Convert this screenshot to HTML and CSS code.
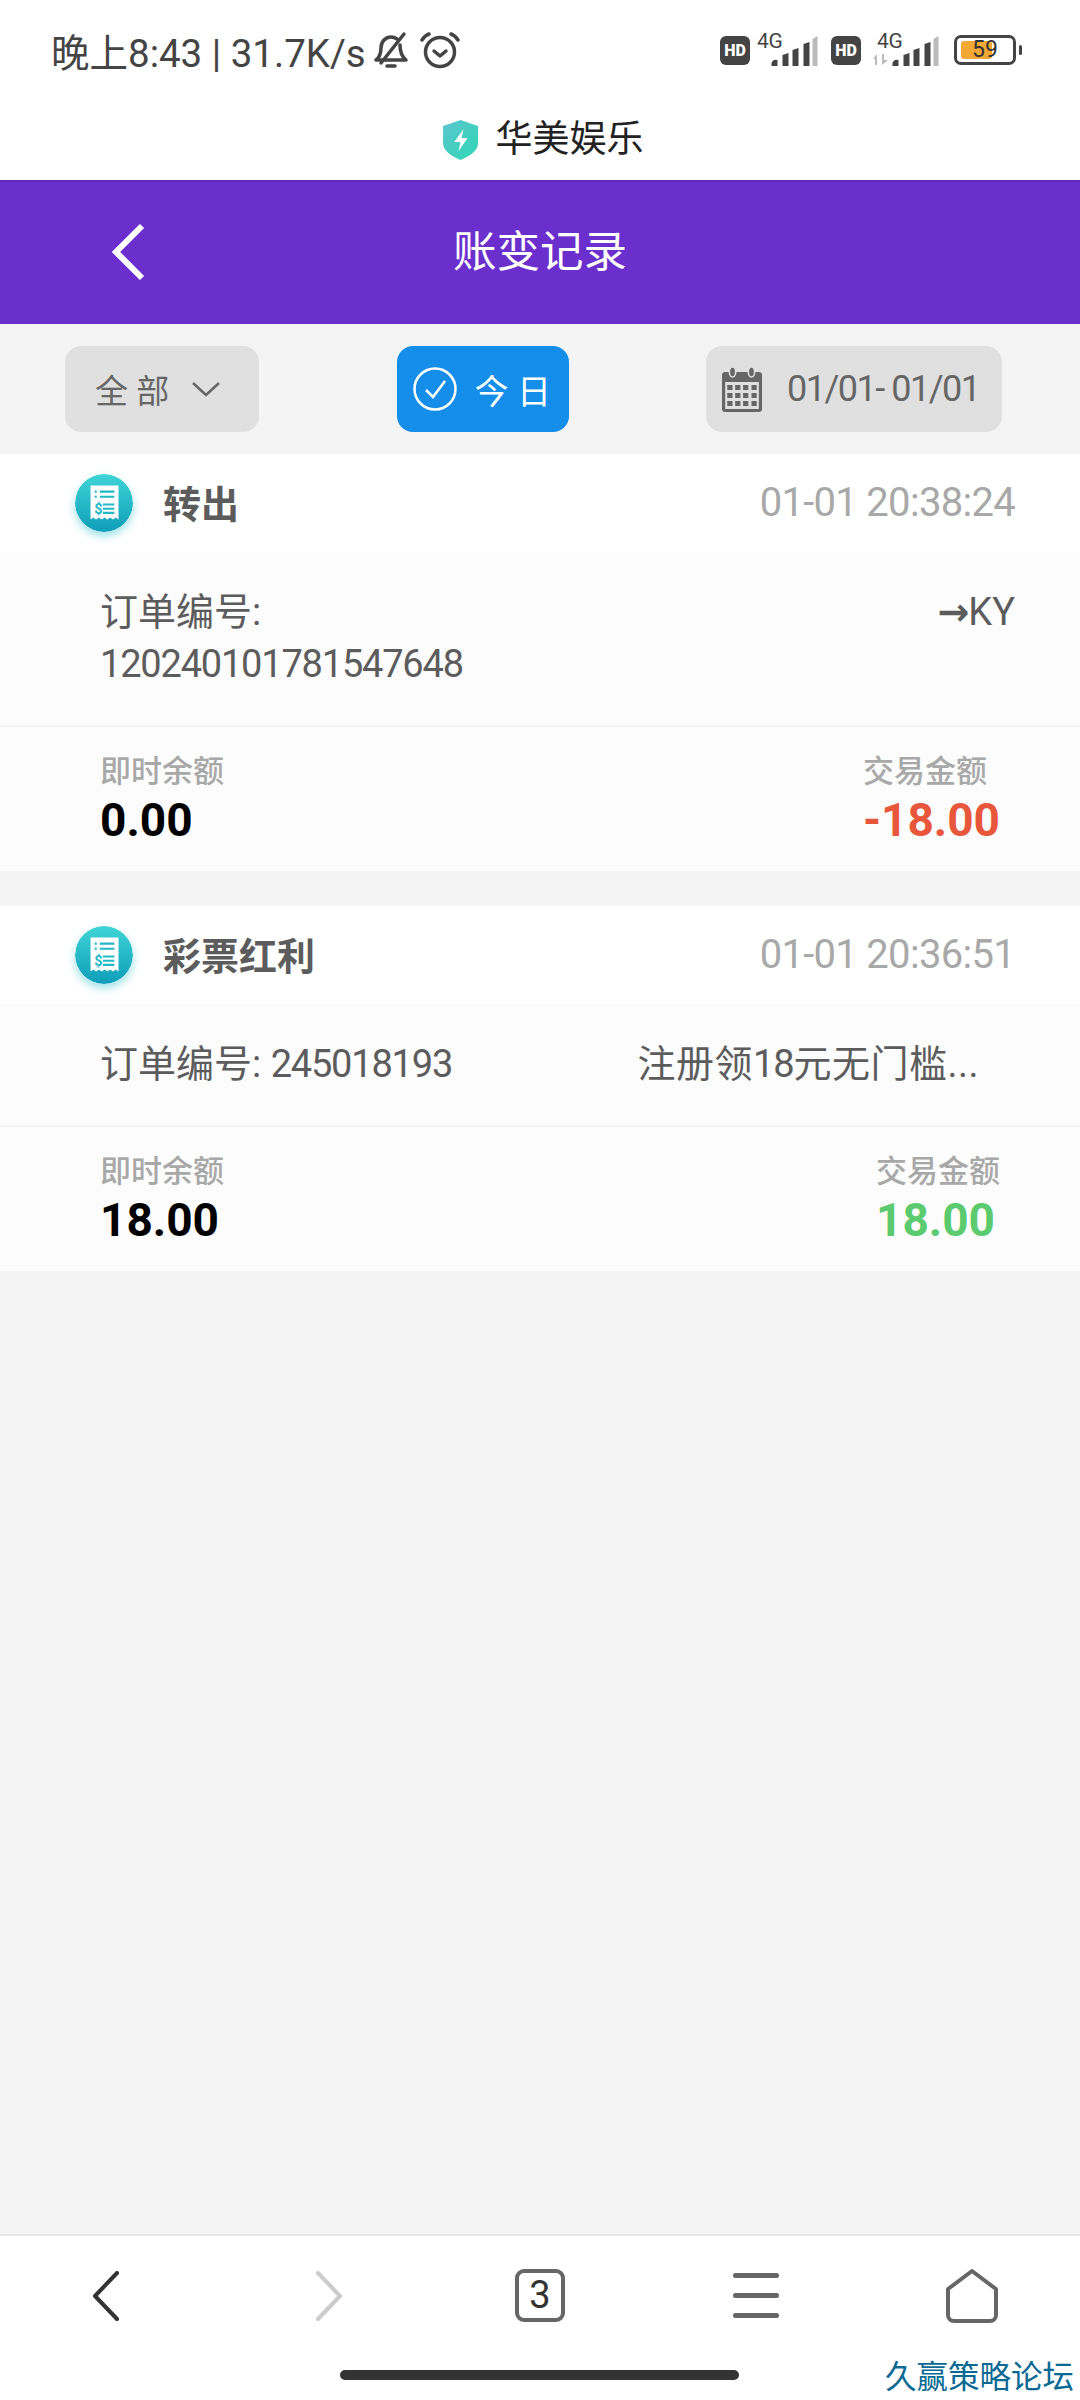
FILE: index.html
```html
<!DOCTYPE html>
<html lang="zh-CN">
<head>
    <meta charset="UTF-8">
    <meta name="viewport" content="width=device-width, initial-scale=1.0">
    <title>账变记录</title>
    <link rel="stylesheet" href="styles.css">
</head>
<body>

    <!-- shared icons -->
    <svg class="icon-defs" width="0" height="0">
        <defs>
            <linearGradient id="receipt-bg" x1="0" y1="0" x2="0" y2="1">
                <stop offset="0" stop-color="#40d4d6"/>
                <stop offset="1" stop-color="#0e9db9"/>
            </linearGradient>
            <linearGradient id="shield-bg" x1="0" y1="0" x2="1" y2="1">
                <stop offset="0" stop-color="#5cc4cf"/>
                <stop offset="1" stop-color="#2fd8b4"/>
            </linearGradient>
            <symbol id="receipt" viewBox="0 0 56 56">
                <circle cx="28" cy="28" r="28" fill="url(#receipt-bg)"/>
                <path d="M15 11h27v33l-2.700 -2l-2.700 2l-2.700 -2l-2.700 2l-2.700 -2l-2.700 2l-2.700 -2l-2.700 2l-2.700 -2l-2.700 2z" fill="#fff"/>
                <path d="M19 17h2M24 17h14M19 22h2M24 22h14M27 29.500h11M27 33.500h11M27 37.500h11" stroke="#22b9c6" stroke-width="2" fill="none"/>
                <text x="18.500" y="39" class="receipt-dollar">$</text>
            </symbol>
        </defs>
    </svg>

    <!-- Status bar -->
    <div class="status-bar">
        <div class="status-left">
            <span class="status-text">晚上8:43 | 31.7K/s</span>
            <svg class="bell" width="36" height="38" viewBox="0 0 36 38" fill="none" stroke="#444" stroke-width="3.500" stroke-linecap="round" stroke-linejoin="round">
                <path d="M3 29c4 -3 5 -6 5 -12c0 -6 4 -11 10 -11c2 0 4 .6 6 2M27 14c0 6 1 11 6 15H3"/>
                <path d="M31 3L8 32"/>
                <path d="M14 35h8"/>
            </svg>
            <svg class="alarm" width="40" height="38" viewBox="0 0 40 38" fill="none" stroke="#444" stroke-width="3.500" stroke-linecap="round" stroke-linejoin="round">
                <circle cx="20" cy="21" r="14.500"/>
                <path d="M14 20l6 5l6 -5"/>
                <path d="M2 9c2 -3 4 -5 7 -6M38 9c-2 -3 -4 -5 -7 -6"/>
            </svg>
        </div>
        <div class="status-right">
            <span class="hd">HD</span>
            <div class="signal">
                <span class="net">4G</span>
                <svg class="bars" width="47" height="30" viewBox="0 0 46 30">
                    <path d="M0 30v-3a5 5 0 0 1 6 -3v6zM11 30V19l6 -2v13zM21 30V14l6 -2v18zM32 30V8l6 -2v24z" fill="#444"/>
                    <path d="M41 30V3l5 -3v30z" fill="#bbb"/>
                </svg>
            </div>
            <span class="hd">HD</span>
            <div class="signal signal-wide">
                <span class="net">4G</span>
                <svg class="arrows" width="15" height="11" viewBox="0 0 15 11">
                    <path d="M4 0v11H2V5H0zM9 11V0h2v6h4z" fill="#bbb"/>
                </svg>
                <svg class="bars" width="47" height="30" viewBox="0 0 46 30">
                    <path d="M0 30v-3a5 5 0 0 1 6 -3v6zM11 30V19l6 -2v13zM21 30V14l6 -2v18zM32 30V8l6 -2v24z" fill="#444"/>
                    <path d="M41 30V3l5 -3v30z" fill="#bbb"/>
                </svg>
            </div>
            <div class="battery">
                <div class="battery-body">
                    <div class="battery-fill"></div>
                    <span class="battery-num">59</span>
                </div>
                <div class="battery-nub"></div>
            </div>
        </div>
    </div>

    <!-- Site name -->
    <div class="site-row">
        <svg width="35" height="40" viewBox="0 0 34 40" preserveAspectRatio="none">
            <path d="M17 0l17 6v17c0 8 -8 13 -17 17c-9 -4 -17 -9 -17 -17V6z" fill="url(#shield-bg)"/>
            <path d="M20 9l-9 13h6l-2 9l9 -13h-6z" fill="#fff"/>
        </svg>
        <span class="site-name">华美娱乐</span>
    </div>

    <!-- Title bar -->
    <header class="title-bar">
        <svg class="title-back" width="34" height="58" viewBox="0 0 34 58" fill="none" stroke="#fff" stroke-width="6">
            <path d="M31 3L5 29l26 26"/>
        </svg>
        <h1>账变记录</h1>
    </header>

    <!-- Filters -->
    <div class="filter-bar">
        <div class="filter-btn filter-all">
            <span class="filter-label">全 部</span>
            <svg width="28" height="16" viewBox="0 0 28 16" fill="none" stroke="#666" stroke-width="2.500">
                <path d="M1 2l13 12L27 2"/>
            </svg>
        </div>
        <div class="filter-btn filter-today">
            <svg width="44" height="44" viewBox="0 0 44 44" fill="none" stroke="#fff" stroke-width="2.500">
                <circle cx="22" cy="22" r="20.500"/>
                <path d="M13 23l7 7l12 -16"/>
            </svg>
            <span class="filter-label">今 日</span>
        </div>
        <div class="filter-btn filter-date">
            <svg width="40" height="45" viewBox="0 0 38 45" preserveAspectRatio="none">
                <path d="M3 5h32a3 3 0 0 1 3 3v34a3 3 0 0 1 -3 3H3a3 3 0 0 1 -3 -3V8a3 3 0 0 1 3 -3z" fill="#666"/>
                <rect x="3" y="15" width="32" height="27" fill="#e0e0e0"/>
                <ellipse cx="10" cy="5" rx="3" ry="5" fill="#666" stroke="#e0e0e0" stroke-width="1.500"/>
                <ellipse cx="28" cy="5" rx="3" ry="5" fill="#666" stroke="#e0e0e0" stroke-width="1.500"/>
                <path d="M5 18h5v5H5zM12.500 18h5v5h-5zM20 18h5v5h-5zM28 18h5v5h-5zM5 26h5v5H5zM12.500 26h5v5h-5zM20 26h5v5h-5zM28 26h5v5h-5zM5 34h5v5H5zM12.500 34h5v5h-5zM20 34h5v5h-5zM28 34h5v5h-5z" fill="#666"/>
            </svg>
            <span class="date-range">01/01- 01/01</span>
        </div>
    </div>

    <!-- Records -->
    <main class="records">
        <section class="record">
            <div class="record-head">
                <svg class="record-icon" width="58" height="58"><use href="#receipt"/></svg>
                <span class="record-type">转出</span>
                <span class="record-time">01-01 20:38:24</span>
            </div>
            <div class="record-detail">
                <div class="order-no">订单编号:<br><span class="num">120240101781547648</span></div>
                <div class="order-note"><span class="arrow">→</span>KY</div>
            </div>
            <div class="record-sum">
                <div class="sum-col">
                    <span class="sum-label">即时余额</span>
                    <span class="sum-value">0.00</span>
                </div>
                <div class="sum-col">
                    <span class="sum-label">交易金额</span>
                    <span class="sum-value out">-18.00</span>
                </div>
            </div>
        </section>

        <section class="record">
            <div class="record-head">
                <svg class="record-icon" width="58" height="58"><use href="#receipt"/></svg>
                <span class="record-type">彩票红利</span>
                <span class="record-time">01-01 20:36:51</span>
            </div>
            <div class="record-detail">
                <div class="order-no">订单编号: <span class="num">245018193</span></div>
                <div class="order-note note-cut">注册领<span class="num">18</span>元无门槛...</div>
            </div>
            <div class="record-sum">
                <div class="sum-col">
                    <span class="sum-label">即时余额</span>
                    <span class="sum-value">18.00</span>
                </div>
                <div class="sum-col">
                    <span class="sum-label">交易金额</span>
                    <span class="sum-value in">18.00</span>
                </div>
            </div>
        </section>
    </main>

    <!-- Browser toolbar -->
    <footer class="toolbar">
        <div class="toolbar-icons">
            <svg class="tool-back" width="28" height="50" viewBox="0 0 28 50" fill="none" stroke="#333" stroke-width="4" stroke-linecap="round" stroke-linejoin="round">
                <path d="M25 2L3 25l22 23"/>
            </svg>
            <svg class="tool-forward" width="28" height="50" viewBox="0 0 28 50" fill="none" stroke="#ccc" stroke-width="4" stroke-linecap="round" stroke-linejoin="round">
                <path d="M3 2l22 23L3 48"/>
            </svg>
            <div class="tab-count">3</div>
            <div class="menu-lines"><i></i><i></i><i></i></div>
            <svg width="52" height="54" viewBox="0 0 52 54" fill="none" stroke="#666" stroke-width="4" stroke-linejoin="round">
                <path d="M26 2L50 20v26a6 6 0 0 1 -6 6H8a6 6 0 0 1 -6 -6V20z"/>
            </svg>
        </div>
        <div class="home-handle"></div>
        <div class="watermark">久赢策略论坛</div>
    </footer>

</body>
</html>
```

FILE: styles.css
```css
html, body {
    margin: 0;
    padding: 0;
}

body {
    width: 1080px;
    height: 2400px;
    overflow: hidden;
    display: flex;
    flex-direction: column;
    background-color: #f4f4f4;
    font-family: Roboto, "Noto Sans CJK SC", sans-serif;
}

.icon-defs {
    position: absolute;
}

.receipt-dollar {
    font-family: Roboto, sans-serif;
    font-size: 14px;
    font-weight: 700;
    fill: #22b9c6;
}

/* Status bar */
.status-bar {
    height: 100px;
    background-color: #fff;
    display: flex;
    align-items: center;
    justify-content: space-between;
    padding: 0 58px 0 51px;
    color: #444;
}

.status-left {
    display: flex;
    align-items: center;
}

.status-text {
    font-size: 38.5px;
}

.bell {
    margin-left: 7px;
}

.alarm {
    margin-left: 11px;
}

.status-right {
    display: flex;
    align-items: center;
}

.hd {
    width: 30px;
    height: 29px;
    border-radius: 6px;
    background-color: #444;
    color: #fff;
    font-size: 16px;
    font-weight: 900;
    line-height: 29px;
    text-align: center;
}

.signal {
    position: relative;
    width: 81px;
    height: 32px;
}

.signal .bars {
    position: absolute;
    right: 13px;
    bottom: 0;
}

.signal .net {
    position: absolute;
    left: 7px;
    top: -4px;
    font-size: 21px;
    line-height: 22px;
    letter-spacing: -0.4px;
}

.signal-wide {
    width: 93px;
}

.signal-wide .bars {
    right: 15px;
}

.signal-wide .net {
    left: 16px;
}

.signal-wide .arrows {
    position: absolute;
    left: 12px;
    bottom: 1px;
}

.battery {
    display: flex;
    align-items: center;
}

.battery-body {
    position: relative;
    box-sizing: border-box;
    width: 62px;
    height: 30px;
    border: 3px solid #444;
    border-radius: 7px;
}

.battery-fill {
    position: absolute;
    left: 4px;
    top: 3px;
    width: 31px;
    height: 18px;
    border-radius: 3px;
    background-color: #f3a833;
}

.battery-num {
    position: absolute;
    left: 15px;
    top: 0;
    font-size: 23px;
    line-height: 24px;
    color: #333;
}

.battery-nub {
    width: 3px;
    height: 10px;
    margin-left: 3px;
    border-radius: 2px;
    background-color: #444;
}

/* Site name */
.site-row {
    height: 80px;
    background-color: #fff;
    display: flex;
    align-items: center;
    justify-content: center;
    gap: 18px;
    padding-left: 6px;
}

.site-name {
    font-size: 37px;
    line-height: 76px;
    color: #222;
}

/* Title bar */
.title-bar {
    height: 144px;
    flex: none;
    box-sizing: border-box;
    display: grid;
    grid-template-columns: 1fr auto 1fr;
    align-items: center;
    padding: 0 111px;
    background-color: #6a2fcc;
    box-shadow: inset 0 3px 3px -2px rgba(0, 0, 0, 0.15);
}

.title-bar h1 {
    margin: 0;
    padding-bottom: 8px;
    font-size: 43.5px;
    font-weight: 400;
    color: #fff;
}

/* Filters */
.filter-bar {
    height: 130px;
    flex: none;
    box-sizing: border-box;
    display: flex;
    align-items: center;
    justify-content: space-between;
    padding: 0 78px 0 65px;
}

.filter-btn {
    height: 86px;
    box-sizing: border-box;
    border-radius: 16px;
    display: flex;
    align-items: center;
    background-color: #e0e0e0;
    color: #666;
}

.filter-label {
    font-size: 33px;
    white-space: pre;
}

.filter-all {
    width: 194px;
    padding-left: 30px;
    gap: 23px;
}

.filter-today {
    width: 172px;
    padding-left: 16px;
    gap: 18px;
    background-color: #148ee8;
    color: #fff;
}

.filter-today .filter-label {
    font-size: 34px;
}

.filter-date {
    width: 296px;
    padding-left: 16px;
    gap: 25px;
}

.date-range {
    font-size: 36px;
    letter-spacing: -1.5px;
}

/* Records */
.records {
    flex: 1;
}

.record {
    margin-bottom: 35px;
    background-color: #fcfcfc;
}

.record-head {
    height: 98px;
    box-sizing: border-box;
    display: flex;
    align-items: center;
    padding: 0 65px 0 75px;
    background-color: #fff;
}

.record-icon {
    flex: none;
    border-radius: 50%;
    box-shadow: 0 4px 8px rgba(30, 190, 205, 0.45);
}

.record-type {
    margin: -4px 0 0 30px;
    font-size: 38px;
    font-weight: 700;
    color: #5c5c5c;
}

.record-time {
    margin: -2px 0 0 auto;
    font-size: 40px;
    letter-spacing: -0.7px;
    color: #a8a8a8;
}

.record-detail {
    display: flex;
    justify-content: space-between;
    padding: 34px 65px 35px 100px;
    border-bottom: 2px solid #f4f4f4;
    font-size: 38px;
    line-height: 52px;
    color: #5c5c5c;
}

.num {
    letter-spacing: -1.2px;
}

.arrow {
    font-family: "DejaVu Sans", sans-serif;
    font-weight: 700;
    letter-spacing: -1px;
}

.note-cut {
    margin-right: 36px;
    letter-spacing: 0.5px;
}

.record-sum {
    height: 144px;
    box-sizing: border-box;
    display: flex;
    justify-content: space-between;
    padding: 22px 80px 0 100px;
}

.sum-col {
    display: flex;
    flex-direction: column;
    align-items: flex-start;
}

.sum-label {
    font-size: 31px;
    font-weight: 500;
    line-height: 46px;
    color: #a8a8a8;
}

.sum-value {
    font-size: 46px;
    font-weight: 700;
    line-height: 50px;
    color: #000;
}

.sum-value.out {
    color: #e8573b;
}

.sum-value.in {
    color: #5ccb6f;
}

/* Browser toolbar */
.toolbar {
    position: relative;
    height: 166px;
    flex: none;
    box-sizing: border-box;
    border-top: 2px solid #e6e6e6;
    background-color: #fff;
}

.toolbar-icons {
    height: 119px;
    display: grid;
    grid-template-columns: repeat(5, 1fr);
    align-items: center;
    justify-items: center;
}

.tool-back {
    margin-right: 4px;
}

.tool-forward {
    margin-left: 10px;
}

.tab-count {
    width: 50px;
    height: 53px;
    box-sizing: border-box;
    border: 4px solid #666;
    border-radius: 9px;
    font-size: 38px;
    line-height: 45px;
    text-align: center;
    color: #333;
}

.menu-lines {
    width: 46px;
    display: flex;
    flex-direction: column;
    gap: 15px;
}

.menu-lines i {
    display: block;
    height: 5px;
    border-radius: 3px;
    background-color: #666;
}

.home-handle {
    width: 399px;
    height: 10px;
    margin: 15px 0 0 340px;
    border-radius: 5px;
    background-color: #333;
}

.watermark {
    position: absolute;
    right: 6px;
    bottom: 1px;
    font-size: 31.500px;
    line-height: 42px;
    color: #0a6a94;
}
```
